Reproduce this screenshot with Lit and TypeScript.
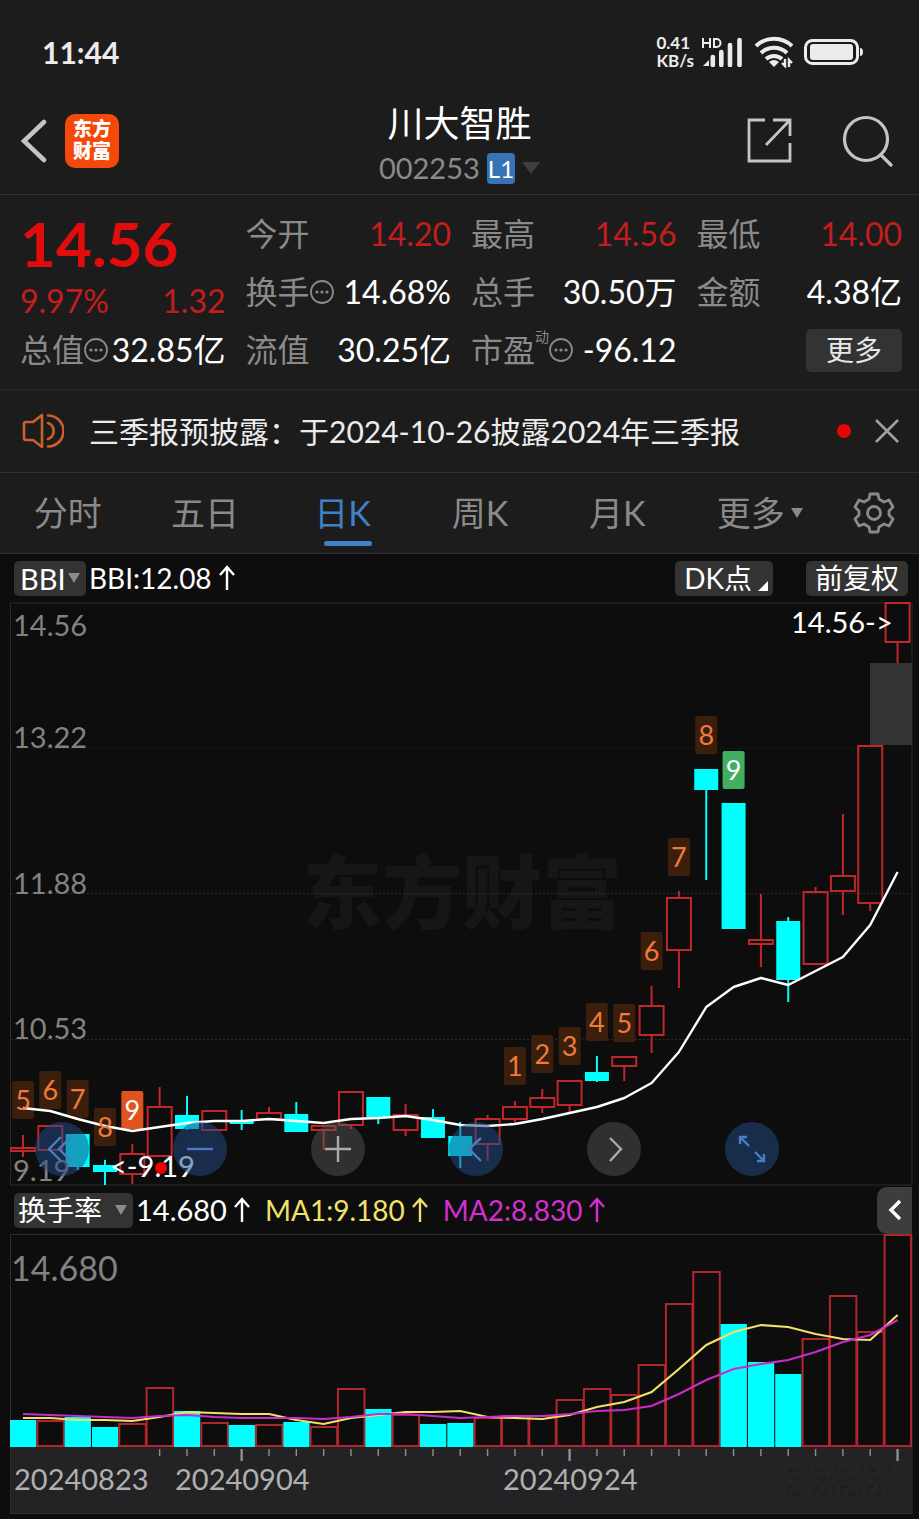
import { LitElement, html, svg, css } from "lit";
import { customElement, state } from "lit/decorators.js";
import { classMap } from "lit/directives/class-map.js";

type Candle = [up: boolean, top: number, bottom: number, high: number, low: number];

const STEP = 27.33;
const cx = (i: number) => 23 + STEP * i;
const line = (ys: number[]) => ys.map((y, i) => `${cx(i).toFixed(1)},${y}`).join(" ");

const candles: Candle[] = [
  [true, 1148, 1151, 1135, 1157], [true, 1126, 1150, 1126, 1150], [false, 1135, 1166, 1134, 1170],
  [false, 1166, 1171, 1160, 1185], [true, 1154, 1174, 1144, 1184], [true, 1107, 1156, 1087, 1156],
  [false, 1116, 1128, 1096, 1130], [true, 1111, 1130, 1111, 1130], [false, 1121, 1123, 1110, 1130],
  [true, 1113, 1119, 1107, 1119], [false, 1115, 1131, 1102, 1131], [true, 1126, 1130, 1126, 1150],
  [true, 1092, 1125, 1092, 1129], [false, 1098, 1116, 1097, 1124], [true, 1115, 1130, 1104, 1136],
  [false, 1118, 1137, 1109, 1138], [false, 1137, 1155, 1122, 1168], [true, 1119, 1144, 1115, 1161],
  [true, 1107, 1119, 1101, 1123], [true, 1098, 1107, 1089, 1113], [true, 1081, 1105, 1080, 1112],
  [false, 1073, 1080, 1056, 1082], [true, 1057, 1066, 1057, 1081], [true, 1006, 1035, 986, 1053],
  [true, 898, 950, 891, 988], [false, 770, 789, 770, 880], [false, 804, 928, 804, 928],
  [true, 940, 944, 894, 967], [false, 922, 979, 917, 1002], [true, 892, 964, 887, 964],
  [true, 876, 891, 814, 915], [true, 746, 903, 746, 911], [true, 603, 642, 603, 663],
];

const bbi = [
  1108, 1111, 1119, 1126, 1131, 1127, 1123, 1121, 1121, 1119, 1121, 1123, 1119, 1118, 1116, 1120, 1125,
  1126, 1124, 1119, 1113, 1107, 1098, 1083, 1052, 1007, 987, 978, 985, 971, 957, 925, 872,
];

const marks: [index: number, label: string, top: number, kind: string][] = [
  [0, "5", 1081, ""], [1, "6", 1071, ""], [2, "7", 1080, ""], [3, "8", 1108, ""], [4, "9", 1091, "hot"],
  [18, "1", 1047, ""], [19, "2", 1035, ""], [20, "3", 1027, ""], [21, "4", 1003, ""], [22, "5", 1004, ""],
  [23, "6", 932, ""], [24, "7", 838, ""], [25, "8", 716, ""], [26, "9", 751, "cool"],
];

const turnover = [
  1420, 1421, 1417, 1427, 1424, 1388, 1411, 1423, 1425, 1425, 1422, 1427, 1389, 1409, 1415, 1424, 1423,
  1418, 1416, 1416, 1400, 1389, 1395, 1365, 1304, 1272, 1324, 1362, 1374, 1339, 1296, 1332, 1235,
];
const fallingDays = new Set([0, 2, 3, 6, 8, 10, 13, 15, 16, 26, 27, 28]);
const ma1 = [
  1418, 1418, 1420, 1420, 1421, 1417, 1412, 1413, 1414, 1414, 1420, 1424, 1418, 1415, 1412, 1412, 1411,
  1417, 1418, 1419, 1415, 1407, 1402, 1392, 1369, 1345, 1332, 1325, 1327, 1334, 1339, 1340, 1315,
];
const ma2 = [
  1414, 1415, 1416, 1417, 1418, 1416, 1415, 1417, 1418, 1418, 1418, 1419, 1417, 1414, 1414, 1416, 1418,
  1417, 1416, 1416, 1414, 1411, 1410, 1406, 1394, 1380, 1369, 1364, 1360, 1352, 1342, 1335, 1320,
];

const arrow = svg`<path d="M8 25V2M1 10L8 2l7 8" fill="none" stroke="currentColor" stroke-width="2.4"/>`;
const upArrow = html`<svg class="up" viewBox="0 0 16 26" width="16" height="26" aria-hidden="true">${arrow}</svg>`;
const caret = html`<svg class="caret" viewBox="0 0 12 10" width="12" height="10" aria-hidden="true"><path d="M0 0h12L6 10z" fill="currentColor"/></svg>`;
const info = html`<svg class="info" viewBox="0 0 24 24" width="24" height="24" aria-hidden="true">
  <circle cx="12" cy="12" r="11" fill="none" stroke="currentColor" stroke-width="1.8"/>
  <circle cx="7" cy="12" r="1.6" fill="currentColor"/><circle cx="12" cy="12" r="1.6" fill="currentColor"/><circle cx="17" cy="12" r="1.6" fill="currentColor"/>
</svg>`;

const tools = [
  { name: "最早", blue: true, d: "M26 15L14 27l12 12M36 15L24 27l12 12" },
  { name: "缩小", blue: true, d: "M14 27h26" },
  { name: "放大", blue: false, d: "M14 27h26M27 14v26" },
  { name: "左移", blue: true, d: "M32 16L20 27l12 12" },
  { name: "右移", blue: false, d: "M23 16l11 11-11 12" },
  { name: "全屏", blue: true, d: "M15 22v-7h7M15 15l9 9M39 32v7h-7M39 39l-9-9" },
];

@customElement("app-root")
export class AppRoot extends LitElement {
  @state() private tab = "日K";
  private tabs = ["分时", "五日", "日K", "周K", "月K", "更多"];

  static styles = css`
    :host {
      display: block;
      background: #0d0d0d;
      color: #fff;
      font-family: Lato, "Noto Sans CJK SC", sans-serif;
      font-size: 32px;
      line-height: 40px;
    }
    * { box-sizing: border-box; }
    svg { display: block; flex: none; }
    button, select {
      font: inherit;
      color: inherit;
      background: none;
      border: 0;
      padding: 0;
      margin: 0;
      appearance: none;
    }
    .panel { background: #1c1c1c; }
    .status {
      display: flex;
      align-items: center;
      height: 104px;
      padding: 0 55px 0 42px;
      color: #ececec;
    }
    .time { font-size: 30px; font-weight: 700; margin-right: auto; }
    .speed { font-size: 17px; line-height: 18px; font-weight: 700; margin-right: 8px; }
    .speed span { display: block; }
    .status svg + svg { margin-left: 10px; }
    .header {
      display: grid;
      grid-template-columns: 1fr auto 1fr;
      height: 91px;
      border-bottom: 1px solid #313131;
      color: #c4c4c4;
    }
    .side { display: flex; align-items: center; height: 74px; gap: 18px; padding-left: 20px; }
    .side.end { justify-content: flex-end; gap: 50px; padding: 0 25px 0 0; }
    .logo {
      width: 54px;
      height: 54px;
      border-radius: 10px;
      background: #f4490b;
      color: #fff;
      font-size: 19px;
      line-height: 22px;
      font-weight: 900;
      padding: 4px 0;
      text-align: center;
    }
    .logo span { display: block; }
    h1 { margin: 0; font-size: 36px; line-height: 38px; font-weight: 400; color: #fff; text-align: center; }
    .code { display: flex; align-items: center; justify-content: center; gap: 7px; margin-top: 8px; height: 36px; font-size: 29px; color: #8a8a8a; }
    .badge { background: #3873b6; color: #fff; font-size: 24px; line-height: 31px; padding: 0 1px; border-radius: 4px; }
    .code svg { color: #3f3f3f; }
    .quote {
      display: grid;
      grid-template-columns: repeat(4, 1fr);
      grid-auto-rows: 58px;
      column-gap: 20px;
      padding: 10px 17px 10px 20px;
      border-bottom: 1px solid #292929;
    }
    .cell { display: flex; align-items: center; justify-content: space-between; color: #8a8a8a; white-space: nowrap; }
    .cell .key { display: flex; align-items: center; }
    .cell b { font-weight: 400; color: #fff; }
    .red, .cell b.red { color: #c31d1d; }
    .lead { grid-row: span 2; }
    .price { font-size: 62px; line-height: 76px; font-weight: 700; color: #e10c0c; }
    .change { display: flex; justify-content: space-between; color: #c31d1d; }
    sup { font-size: 14px; line-height: 14px; align-self: flex-start; }
    .more { justify-self: end; align-self: center; width: 96px; height: 43px; background: #333; border-radius: 5px; font-size: 28px; line-height: 40px; color: #e8e8e8; }
    .notice {
      display: flex;
      align-items: center;
      height: 83px;
      padding: 0 20px 0 22px;
      border-bottom: 1px solid #313131;
      font-size: 30px;
      color: #ececec;
    }
    .notice p { margin: 0 auto 0 25px; white-space: nowrap; }
    .dot { width: 14px; height: 14px; border-radius: 50%; background: #e60505; margin-right: 24px; }
    .tabs { display: flex; height: 81px; padding-left: 4px; border-bottom: 1px solid #313131; color: #8a8a8a; }
    .tab { flex: 138 1 0; display: grid; grid-template-columns: auto auto; justify-content: center; align-content: center; align-items: center; column-gap: 6px; padding-top: 13px; font-size: 34px; }
    .tab::after { content: ""; grid-column: 1 / -1; justify-self: center; width: 48px; height: 5px; border-radius: 3px; margin-top: 8px; }
    .tab.on { color: #4280c6; }
    .tab.on::after { background: #4280c6; }
    .gear { flex: 91 1 0; display: flex; align-items: center; justify-content: center; }
    .bar { display: flex; align-items: center; height: 48px; padding: 0 11px 0 14px; font-size: 29px; white-space: nowrap; }
    .bar .up { margin: 0 15px 0 7px; }
    .bar .val { font-size: 28px; }
    .pick { display: grid; align-items: center; background: #333; border-radius: 5px; height: 35px; margin-right: 3px; }
    .pick select, .pick svg { grid-area: 1 / 1; }
    .pick select { padding: 0 20px 0 6px; height: 35px; line-height: 35px; }
    .pick svg { justify-self: end; margin-right: 6px; pointer-events: none; color: #8a8a8a; }
    .pick.wide select { padding: 0 30px 0 4px; font-size: 28px; }
    .chip { display: flex; align-items: center; justify-content: center; height: 35px; background: #333; border-radius: 5px; padding: 0 9px; font-size: 28px; line-height: 35px; }
    .chip.dk { margin-left: auto; margin-right: 33px; padding-right: 5px; gap: 6px; align-items: center; }
    .chip.dk svg { align-self: flex-end; margin-bottom: 5px; }
    .bar.sub { padding-right: 7px; }
    .yellow { color: #f2e06a; }
    .pink { color: #d42fd0; }
    .fold { margin-left: auto; width: 35px; height: 47px; background: #3d3d3d; border-radius: 10px 0 0 10px; display: grid; place-items: center; }
    .chart { position: relative; }
    .plot { width: 100%; height: auto; }
    .plot text { font-size: 29px; }
    .axis { fill: #828282; }
    .plot .axis-big { fill: #828282; font-size: 34px; }
    .plot .date { fill: #b0b0b0; }
    .plot .water { font-size: 80px; font-weight: 900; fill: #161616; }
    .plot .mark { font-size: 27px; fill: #ee7a3c; text-anchor: middle; }
    .plot .mark.hot, .plot .mark.cool { fill: #fff; }
    .tag { fill: #3b1f0c; }
    .tag.hot { fill: #e0531f; }
    .tag.cool { fill: #41ae62; }
    .label { fill: #fff; }
    .tools { position: absolute; left: 35px; right: 140px; bottom: 10px; display: flex; justify-content: space-between; }
    .tool { width: 54px; height: 54px; border-radius: 50%; background: rgba(90, 90, 90, 0.45); color: #aaa; }
    .tool.blue { background: rgba(35, 75, 135, 0.52); color: #4a7cc4; }
    .foot { height: 5px; }
  `;

  private drawCandle([up, top, bottom, high, low]: Candle, i: number) {
    const x = cx(i);
    const color = up ? "#c0262a" : "#00ffff";
    return svg`<g stroke=${color} stroke-width="2">
      ${high < top ? svg`<path d="M${x} ${high}V${top}"/>` : null}
      ${low > bottom ? svg`<path d="M${x} ${bottom}V${low}"/>` : null}
      <rect x=${x - (up ? 12 : 11)} y=${top} width=${up ? 24 : 22} height=${bottom - top} fill=${up ? "none" : color}/>
    </g>`;
  }

  private drawBar(y: number, i: number) {
    const x = cx(i) - 13;
    return fallingDays.has(i)
      ? svg`<rect x=${x} y=${y} width="26.3" height=${1447 - y} fill="#00ffff"/>`
      : svg`<rect x=${x} y=${y} width="26.5" height=${1446 - y} fill="none" stroke="#b0262a" stroke-width="2"/>`;
  }

  private priceChart() {
    return html`<svg class="plot" viewBox="0 602 919 584" role="img" aria-label="日K线图">
      <text class="water" x="302" y="922">东方财富</text>
      <path d="M10.500 603V1186M912 603V1186M10 603H912M10 1185H912" fill="none" stroke="#2b2b2b"/>
      <path d="M11 893.500H911M11 1039.500H911" stroke="#2c2c2c" stroke-dasharray="2 2"/>
      <path d="M11 748.500H911" stroke="#1c1c1c" stroke-dasharray="2 2"/>
      <rect x="870" y="663" width="42" height="82" fill="#333"/>
      ${candles.map((c, i) => this.drawCandle(c, i))}
      ${marks.map(([i, , top, kind]) => svg`<rect class="tag ${kind}" x=${cx(i) - 11} y=${top} width="22" height="38" rx="2"/>`)}
      <text class="axis" x="13" y="636">14.56</text>
      <text class="axis" x="13" y="748">13.22</text>
      <text class="axis" x="13" y="894">11.88</text>
      <text class="axis" x="13" y="1039">10.53</text>
      <text class="axis" x="13" y="1181">9.19</text>
      <polyline points=${line(bbi)} fill="none" stroke="#fff" stroke-width="2.4" stroke-linejoin="round"/>
      ${marks.map(([i, label, top, kind]) => svg`<text class="mark ${kind}" x=${cx(i)} y=${top + 29}>${label}</text>`)}
      <circle cx="161" cy="1168" r="6" fill="#f00000"/>
      <text class="label" x="110" y="1177">&lt;-9.19</text>
      <text class="label" x="791" y="633">14.56-&gt;</text>
    </svg>`;
  }

  private turnoverChart() {
    const ticks = candles.map((_, i) => i).filter((i) => i >= 5);
    return html`<svg class="plot" viewBox="0 1234 919 280" role="img" aria-label="换手率图">
      <rect x="10" y="1447" width="902" height="67" fill="#232325"/>
      <path d="M10.500 1234V1514M912 1234V1514M10 1234.500H912" fill="none" stroke="#2d2d2d"/>
      <path d="M10 1513.500H912" stroke="#303032"/>
      ${turnover.map((y, i) => this.drawBar(y, i))}
      <polyline points=${line(ma1)} fill="none" stroke="#f2e06a" stroke-width="2.2"/>
      <polyline points=${line(ma2)} fill="none" stroke="#c92cc9" stroke-width="2.2"/>
      ${ticks.map((i) => svg`<path d="M${cx(i)} 1449V${i % 12 === 8 ? 1461 : 1456}" stroke="#8f8f8f" stroke-width=${i % 12 === 8 ? 2.4 : 1.4}/>`)}
      <text class="axis-big" x="11" y="1281">14.680</text>
      <text class="date" x="14" y="1490">20240823</text>
      <text class="date" x="175" y="1490">20240904</text>
      <text class="date" x="503" y="1490">20240924</text>
      <path d="M780 1470h116M784 1479h112M778 1487h110M786 1494h108" stroke="#1e1e1f" stroke-width="3" stroke-dasharray="3 5 7 4 2 6" fill="none"/>
    </svg>`;
  }

  render() {
    return html`
      <div class="panel">
        <div class="status">
          <span class="time">11:44</span>
          <span class="speed"><span>0.41</span><span>KB/s</span></span>
          <svg viewBox="0 0 42 30" width="42" height="30" aria-hidden="true">
            <g fill="none" stroke="#ececec" stroke-width="2"><path d="M1 1v10M8 1v10M1 6h7M12 2v8h2.500a4 4 0 0 0 0-8z"/></g>
            <g stroke="#ececec" stroke-width="4.600"><path d="M10.800 28V20M19.300 28V15M28 28V8M37.500 28V3" stroke-linecap="round"/></g>
            <path d="M1 29l6-6v6z" fill="#ececec"/>
          </svg>
          <svg viewBox="0 0 40 32" width="40" height="32" aria-hidden="true">
            <g fill="none" stroke="#ececec" stroke-width="4"><path d="M2 10a26 26 0 0 1 36 0M7 17a19 19 0 0 1 26 0M12 23a12 12 0 0 1 16 0"/></g>
            <path d="M15 26q5-4 10 0l-5 5z" fill="#ececec"/>
            <path d="M31 23v7l-3-3M35 31v-7l3 3" fill="none" stroke="#ececec" stroke-width="2.400"/>
          </svg>
          <svg viewBox="0 0 60 28" width="60" height="28" aria-hidden="true">
            <rect x="1.500" y="2.500" width="52" height="23" rx="7" fill="none" stroke="#ececec" stroke-width="3"/>
            <rect x="6" y="6" width="43" height="16" rx="3" fill="#ececec"/>
            <path d="M56 10q3 0 3 4t-3 4z" fill="#ececec"/>
          </svg>
        </div>
        <header class="header">
          <div class="side">
            <button aria-label="返回"><svg viewBox="0 0 27 44" width="27" height="44"><path d="M24 3L4 22l20 19" fill="none" stroke="currentColor" stroke-width="4.500" stroke-linecap="round"/></svg></button>
            <div class="logo"><span>东方</span><span>财富</span></div>
          </div>
          <div>
            <h1>川大智胜</h1>
            <div class="code">
              <span>002253</span><span class="badge">L1</span>
              <svg viewBox="0 0 18 12" width="18" height="12" aria-hidden="true"><path d="M0 0h18L9 12z" fill="currentColor"/></svg>
            </div>
          </div>
          <div class="side end">
            <button aria-label="分享"><svg viewBox="0 0 46 46" width="46" height="46"><g fill="none" stroke="currentColor" stroke-width="2.800"><path d="M19 2H3v41h41V25M27 2h17v16M43 3L20 27"/></g></svg></button>
            <button aria-label="搜索"><svg viewBox="0 0 52 52" width="52" height="52"><g fill="none" stroke="currentColor" stroke-width="3.200" stroke-linecap="round"><circle cx="24" cy="24" r="21.500"/><path d="M39 40l10 10"/></g></svg></button>
          </div>
        </header>

        <section class="quote">
          <div class="lead">
            <div class="price">14.56</div>
            <div class="change"><span>9.97%</span><span>1.32</span></div>
          </div>
          <div class="cell"><span>今开</span><b class="red">14.20</b></div>
          <div class="cell"><span>最高</span><b class="red">14.56</b></div>
          <div class="cell"><span>最低</span><b class="red">14.00</b></div>
          <div class="cell"><span class="key">换手${info}</span><b>14.68%</b></div>
          <div class="cell"><span>总手</span><b>30.50万</b></div>
          <div class="cell"><span>金额</span><b>4.38亿</b></div>
          <div class="cell"><span class="key">总值${info}</span><b>32.85亿</b></div>
          <div class="cell"><span>流值</span><b>30.25亿</b></div>
          <div class="cell"><span class="key">市盈<sup>动</sup>${info}</span><b>-96.12</b></div>
          <button class="more">更多</button>
        </section>

        <div class="notice">
          <svg viewBox="0 0 42 36" width="42" height="36" aria-hidden="true"><g fill="none" stroke="#cb602b" stroke-width="2.600" stroke-linejoin="round"><path d="M20 2v32l-9-7H4q-2 0-2-2V11q0-2 2-2h7z"/><path d="M26 2.500a15.500 15.500 0 0 1 0 31M26 10a8.500 8.500 0 0 1 0 16" stroke-linecap="round"/></g></svg>
          <p>三季报预披露：于2024-10-26披露2024年三季报</p>
          <span class="dot"></span>
          <button aria-label="关闭"><svg viewBox="0 0 24 24" width="24" height="24"><path d="M1 1l22 22M23 1L1 23" stroke="#a0a0a0" stroke-width="2.600"/></svg></button>
        </div>

        <nav class="tabs">
          ${this.tabs.map(
            (t) => html`<button class=${classMap({ tab: true, on: t === this.tab })} @click=${() => (this.tab = t)}>
              <span>${t}</span>${t === "更多" ? caret : null}
            </button>`,
          )}
          <button class="gear" aria-label="设置">
            <svg viewBox="0 0 42 42" width="42" height="42"><g fill="none" stroke="currentColor" stroke-width="2.800" stroke-linejoin="round">
              <path d="M17 2h8l1 5 5 3 5-2 4 7-4 4v4l4 4-4 7-5-2-5 3-1 5h-8l-1-5-5-3-5 2-4-7 4-4v-4l-4-4 4-7 5 2 5-3z"/><circle cx="21" cy="21" r="6.500"/></g></svg>
          </button>
        </nav>
      </div>

      <div class="bar">
        <label class="pick"><select aria-label="主图指标"><option>BBI</option></select>${caret}</label>
        <span class="val">BBI:12.08</span>${upArrow}
        <button class="chip dk">DK点<svg viewBox="0 0 10 10" width="10" height="10" aria-hidden="true"><path d="M10 0v10H0z" fill="#fff"/></svg></button>
        <button class="chip">前复权</button>
      </div>
      <div class="chart">
        ${this.priceChart()}
        <div class="tools">
          ${tools.map(
            (t) => html`<button class=${classMap({ tool: true, blue: t.blue })} aria-label=${t.name}>
              <svg viewBox="0 0 54 54" width="54" height="54"><path d=${t.d} fill="none" stroke="currentColor" stroke-width="2.400"/></svg>
            </button>`,
          )}
        </div>
      </div>
      <div class="bar sub">
        <label class="pick wide"><select aria-label="副图指标"><option>换手率</option></select>${caret}</label>
        <span>14.680</span>${upArrow}
        <span class="val yellow">MA1:9.180</span><span class="yellow">${upArrow}</span>
        <span class="val pink">MA2:8.830</span><span class="pink">${upArrow}</span>
        <button class="fold" aria-label="展开"><svg viewBox="0 0 14 22" width="14" height="22"><path d="M12 2L3 11l9 9" fill="none" stroke="#fff" stroke-width="3.400"/></svg></button>
      </div>
      ${this.turnoverChart()}
      <div class="foot"></div>
    `;
  }
}
